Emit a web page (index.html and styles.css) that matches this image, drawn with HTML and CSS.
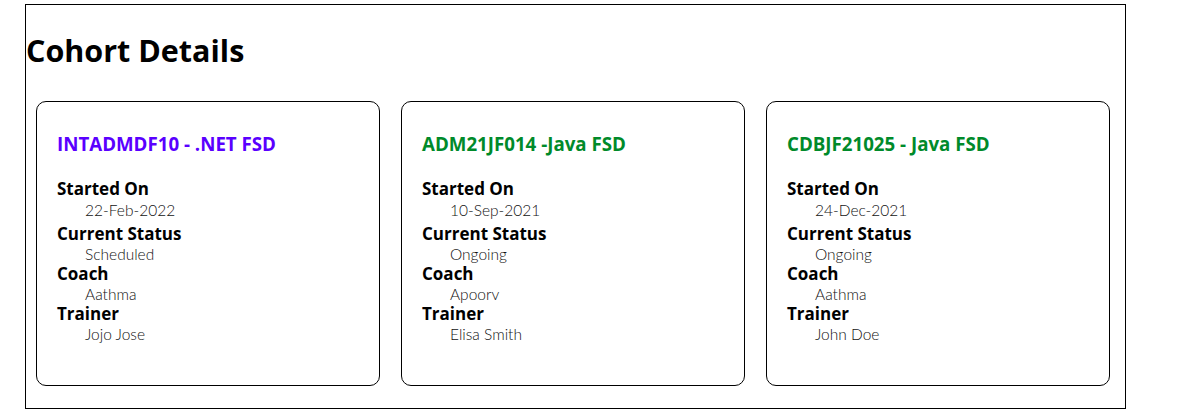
FILE: index.html
```html
<!DOCTYPE html>
<html lang="en">
<head>
<meta charset="utf-8">
<title>Cohort Details</title>
<link rel="stylesheet" href="styles.css">
</head>
<body>
<div class="page">
  <h1 class="page-title">Cohort Details</h1>
  <div class="cards">
    <div class="card">
      <h3 class="card-title scheduled">INTADMDF10 - .NET FSD</h3>
      <dl class="fields">
        <dt>Started On</dt>
        <dd class="date">22-Feb-2022</dd>
        <dt>Current Status</dt>
        <dd>Scheduled</dd>
        <dt>Coach</dt>
        <dd>Aathma</dd>
        <dt>Trainer</dt>
        <dd>Jojo Jose</dd>
      </dl>
    </div>
    <div class="card">
      <h3 class="card-title ongoing">ADM21JF014 -Java FSD</h3>
      <dl class="fields">
        <dt>Started On</dt>
        <dd class="date">10-Sep-2021</dd>
        <dt>Current Status</dt>
        <dd>Ongoing</dd>
        <dt>Coach</dt>
        <dd>Apoorv</dd>
        <dt>Trainer</dt>
        <dd>Elisa Smith</dd>
      </dl>
    </div>
    <div class="card">
      <h3 class="card-title ongoing">CDBJF21025 - Java FSD</h3>
      <dl class="fields">
        <dt>Started On</dt>
        <dd class="date">24-Dec-2021</dd>
        <dt>Current Status</dt>
        <dd>Ongoing</dd>
        <dt>Coach</dt>
        <dd>Aathma</dd>
        <dt>Trainer</dt>
        <dd>John Doe</dd>
      </dl>
    </div>
  </div>
</div>
</body>
</html>
```
FILE: styles.css
```css
html, body {
  margin: 0;
  padding: 0;
  background: #fff;
  color: #000;
  font-family: "Open Sans", "Noto Sans", sans-serif;
}

.page {
  box-sizing: border-box;
  width: 1101px;
  height: 405px;
  margin: 4px 0 0 25px;
  border: 1px solid #000;
  padding: 25px 0 0 0;
}

.page-title {
  margin: 0;
  font-size: 30.5px;
  font-weight: 700;
  line-height: 40px;
}

.cards {
  display: grid;
  grid-template-columns: repeat(3, 344px);
  column-gap: 21px;
  padding-left: 10px;
  margin-top: 31px;
}

.card {
  box-sizing: border-box;
  height: 285px;
  border: 1px solid #000;
  border-radius: 10px;
  padding: 30px 20px 0 20px;
}

.card-title {
  margin: 0;
  font-size: 18.72px;
  font-weight: 700;
  line-height: 24px;
}

.card-title.scheduled { color: #5a00ff; }
.card-title.ongoing { color: #008a2a; }

.fields {
  margin: 23px 0 0 0;
}

.fields dt {
  font-size: 17px;
  font-weight: 700;
  line-height: 20px;
}

.fields dd {
  margin: 0 0 0 28px;
  font-family: "Lato", "Open Sans", sans-serif;
  font-weight: 300;
  font-size: 15.5px;
  line-height: 20px;
  color: #111;
}

.fields dd.date {
  margin-top: 1px;
  margin-bottom: 4px;
}
```
